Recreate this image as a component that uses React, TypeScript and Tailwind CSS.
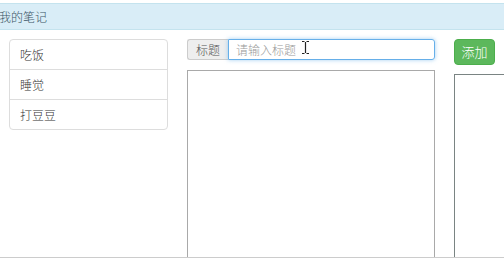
import React from "react";

const font = { fontFamily: '"Microsoft YaHei", "Noto Sans CJK SC", "Liberation Sans", sans-serif' };

export default function App() {
  return (
    <div
      className="relative h-[258px] w-[504px] overflow-hidden border-b border-[#cccccc] bg-white pt-[3px] text-[12px] font-light text-[#333]"
      style={font}
    >
      <div className="flex h-[27px] items-center border-y border-[#c4e3ee] bg-[#d9edf7] text-[12px] text-[#3b5566]">
        <span className="-ml-[1px]">我的笔记</span>
      </div>
      <div className="mt-[9px] flex items-start">
        <ul className="ml-[9px] w-[159px] shrink-0 rounded-[4px] border border-[#dddddd]">
          <li className="flex h-[30px] items-center border-b border-[#dddddd] pl-[10px]">吃饭</li>
          <li className="flex h-[30px] items-center border-b border-[#dddddd] pl-[10px]">睡觉</li>
          <li className="flex h-[29px] items-center pl-[10px]">打豆豆</li>
        </ul>
        <div className="ml-[19px] flex w-[248px] shrink-0 flex-col">
          <div className="relative flex h-[21px]">
            <span className="flex w-[41px] items-center justify-center rounded-l-[3px] border border-r-0 border-[#cccccc] bg-[#eeeeee] text-[12px] text-[#555]">
              标题
            </span>
            <div className="flex flex-1 items-center rounded-r-[3px] border border-[#66afe9] pl-[7px] text-[12px] text-[#999] shadow-[0_0_4px_rgba(102,175,233,0.6)]">
              请输入标题
            </div>
            <svg className="absolute left-[114px] top-[1px]" width="9" height="15" viewBox="0 0 9 15">
              <path d="M1 1.5h2.5M5.5 1.5H8M4.5 2v11M1 13.5h2.5M5.5 13.5H8" stroke="#222" strokeWidth="1.2" fill="none" />
            </svg>
          </div>
          <div className="mt-[10px] h-[200px] border border-[#a9a9a9] bg-white" />
        </div>
        <div className="ml-[19px] flex shrink-0 flex-col">
          <div className="flex h-[26px] w-[41px] items-center justify-center rounded-[4px] border border-[#4cae4c] bg-[#5cb85c] text-[13px] text-white">
            添加
          </div>
          <div className="mt-[9px] h-[200px] w-[80px] border border-[#7a8483] bg-white" />
        </div>
      </div>
    </div>
  );
}
